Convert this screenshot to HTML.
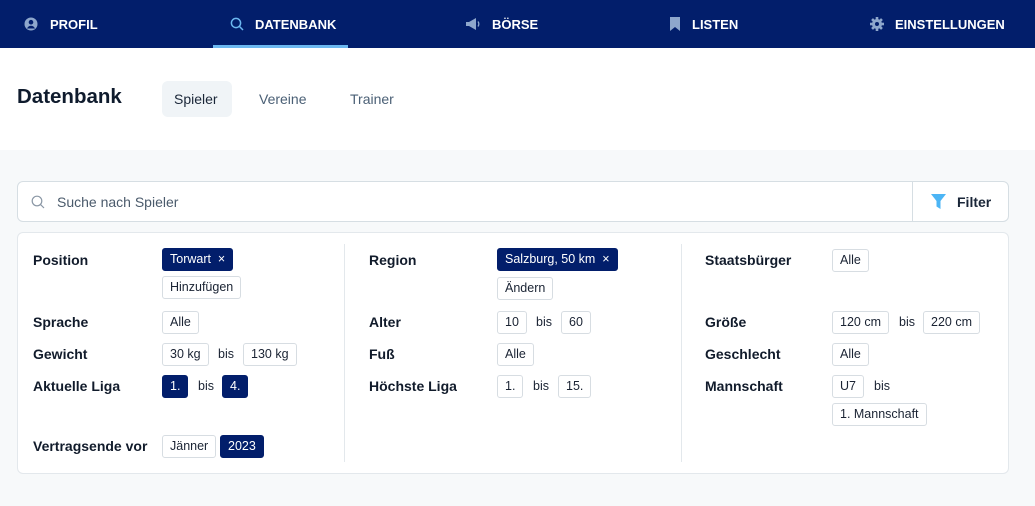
<!DOCTYPE html>
<html><head><meta charset="utf-8"><style>
*{box-sizing:border-box;margin:0;padding:0}
body{width:1035px;height:506px;overflow:hidden;font-family:"Liberation Sans",sans-serif;background:#f7f9fa;position:relative;color:#0f1b2d}
.nav{position:absolute;left:0;top:0;width:1035px;height:48px;background:#021e6b}
.ni{position:absolute;top:0;height:48px;line-height:49px;color:#fff;font-weight:700;font-size:13px}
.ni svg{position:absolute;top:17px}
.ul{position:absolute;left:213px;top:45px;width:135px;height:3px;background:#6cb8f0}
.top{position:absolute;left:0;top:48px;width:1035px;height:102px;background:#fff}
.a{position:absolute;white-space:nowrap}
.lab{position:absolute;font-size:14px;font-weight:600;color:#111b2b;line-height:20px}
.c{position:absolute;height:23px;line-height:21px;font-size:12.5px;padding:0 7px;border:1px solid #d7dde2;border-radius:3px;background:#fff;color:#1a2333;white-space:nowrap}
.d{background:#021e6b;border-color:#021e6b;color:#fff}
.bis{position:absolute;font-size:12.5px;line-height:23px;color:#1a2333}
</style></head><body>
<div class="nav">
 <div class="ni" style="left:24px"><svg style="left:0" width="14" height="14" viewBox="0 0 14 14"><circle cx="7" cy="7" r="6.5" fill="#8ea7cc"/><circle cx="7" cy="5.2" r="2.3" fill="#021e6b"/><path d="M3 11.5c1-2 2.3-2.8 4-2.8s3 .8 4 2.8" fill="#021e6b"/></svg><span style="margin-left:26px">PROFIL</span></div>
 <div class="ni" style="left:230px"><svg style="left:0" width="14" height="14" viewBox="0 0 14 14"><circle cx="6" cy="6" r="4.6" fill="none" stroke="#6cb8f0" stroke-width="1.5"/><path d="M9.4 9.4L13 13" stroke="#6cb8f0" stroke-width="1.5"/></svg><span style="margin-left:25px">DATENBANK</span></div>
 <div class="ni" style="left:465px"><svg style="left:0" width="16" height="14" viewBox="0 0 16 14"><path d="M1 5h3l7-4v12l-7-4H1z" fill="#8ea7cc"/><path d="M13 4.5c1 1.5 1 3.5 0 5" stroke="#8ea7cc" stroke-width="1.3" fill="none"/></svg><span style="margin-left:27px">BÖRSE</span></div>
 <div class="ni" style="left:668px"><svg style="left:1px" width="12" height="14" viewBox="0 0 12 14"><path d="M1 0h10v14l-5-4-5 4z" fill="#8ea7cc"/></svg><span style="margin-left:24px">LISTEN</span></div>
 <div class="ni" style="left:870px"><svg style="left:0" width="14" height="14" viewBox="0 0 14 14"><g fill="#8ea7cc"><circle cx="7" cy="7" r="5"/><rect x="5.7" y="0" width="2.6" height="14"/><rect x="0" y="5.7" width="14" height="2.6"/><rect x="5.7" y="0" width="2.6" height="14" transform="rotate(45 7 7)"/><rect x="5.7" y="0" width="2.6" height="14" transform="rotate(-45 7 7)"/></g><circle cx="7" cy="7" r="2" fill="#021e6b"/></svg><span style="margin-left:25px">EINSTELLUNGEN</span></div>
 <div class="ul"></div>
</div>
<div class="top">
 <div class="a" style="left:17px;top:37px;font-size:20.5px;font-weight:600;color:#0f1b2d">Datenbank</div>
 <div class="a" style="left:162px;top:33px;width:70px;height:36px;background:#f0f4f7;border-radius:6px"></div>
 <div class="a" style="left:174px;top:43px;font-size:14px;color:#1a2638">Spieler</div>
 <div class="a" style="left:259px;top:43px;font-size:14px;color:#4a5f75">Vereine</div>
 <div class="a" style="left:350px;top:43px;font-size:14px;color:#4a5f75">Trainer</div>
</div>
<div class="a" style="left:17px;top:181px;width:992px;height:41px;background:#fff;border:1px solid #d6dee3;border-radius:6px">
 <svg style="position:absolute;left:13px;top:13px" width="14" height="14" viewBox="0 0 14 14"><circle cx="6" cy="6" r="4.8" fill="none" stroke="#8a97a5" stroke-width="1.2"/><path d="M9.5 9.5L13 13" stroke="#8a97a5" stroke-width="1.2"/></svg>
 <div class="a" style="left:39px;top:12px;font-size:14px;color:#4a5a6b">Suche nach Spieler</div>
 <div class="a" style="left:894px;top:0;width:1px;height:39px;background:#d6dee3"></div>
 <svg style="position:absolute;left:913px;top:12px" width="15" height="16" viewBox="0 0 15 16"><path d="M0 0h15l-5.5 7v8l-4-2.5V7z" fill="#4cb5f5"/></svg>
 <div class="a" style="left:939px;top:12px;font-size:14px;font-weight:600;color:#1a2638">Filter</div>
</div>
<div class="a" style="left:17px;top:232px;width:992px;height:242px;background:#fff;border:1px solid #e3e8ec;border-radius:6px"></div>
<div class="a" style="left:344px;top:244px;width:1px;height:218px;background:#e3e8ec"></div>
<div class="a" style="left:681px;top:244px;width:1px;height:218px;background:#e3e8ec"></div>

<div class="lab" style="left:33px;top:250px">Position</div>
<div class="c d" style="left:162px;top:248px">Torwart &nbsp;×</div>
<div class="c" style="left:162px;top:276px">Hinzufügen</div>
<div class="lab" style="left:33px;top:312px">Sprache</div>
<div class="c" style="left:162px;top:311px">Alle</div>
<div class="lab" style="left:33px;top:344px">Gewicht</div>
<div class="c" style="left:162px;top:343px">30 kg</div><div class="bis" style="left:218px;top:343px">bis</div><div class="c" style="left:243px;top:343px">130 kg</div>
<div class="lab" style="left:33px;top:376px">Aktuelle Liga</div>
<div class="c d" style="left:162px;top:375px">1.</div><div class="bis" style="left:198px;top:375px">bis</div><div class="c d" style="left:222px;top:375px">4.</div>
<div class="lab" style="left:33px;top:436px">Vertragsende vor</div>
<div class="c" style="left:162px;top:435px">Jänner</div><div class="c d" style="left:220px;top:435px">2023</div>

<div class="lab" style="left:369px;top:250px">Region</div>
<div class="c d" style="left:497px;top:248px">Salzburg, 50 km &nbsp;×</div>
<div class="c" style="left:497px;top:277px">Ändern</div>
<div class="lab" style="left:369px;top:312px">Alter</div>
<div class="c" style="left:497px;top:311px">10</div><div class="bis" style="left:536px;top:311px">bis</div><div class="c" style="left:561px;top:311px">60</div>
<div class="lab" style="left:369px;top:344px">Fuß</div>
<div class="c" style="left:497px;top:343px">Alle</div>
<div class="lab" style="left:369px;top:376px">Höchste Liga</div>
<div class="c" style="left:497px;top:375px">1.</div><div class="bis" style="left:533px;top:375px">bis</div><div class="c" style="left:558px;top:375px">15.</div>

<div class="lab" style="left:705px;top:250px">Staatsbürger</div>
<div class="c" style="left:832px;top:249px">Alle</div>
<div class="lab" style="left:705px;top:312px">Größe</div>
<div class="c" style="left:832px;top:311px">120 cm</div><div class="bis" style="left:899px;top:311px">bis</div><div class="c" style="left:923px;top:311px">220 cm</div>
<div class="lab" style="left:705px;top:344px">Geschlecht</div>
<div class="c" style="left:832px;top:343px">Alle</div>
<div class="lab" style="left:705px;top:376px">Mannschaft</div>
<div class="c" style="left:832px;top:375px">U7</div><div class="bis" style="left:874px;top:375px">bis</div>
<div class="c" style="left:832px;top:403px">1. Mannschaft</div>
</body></html>
